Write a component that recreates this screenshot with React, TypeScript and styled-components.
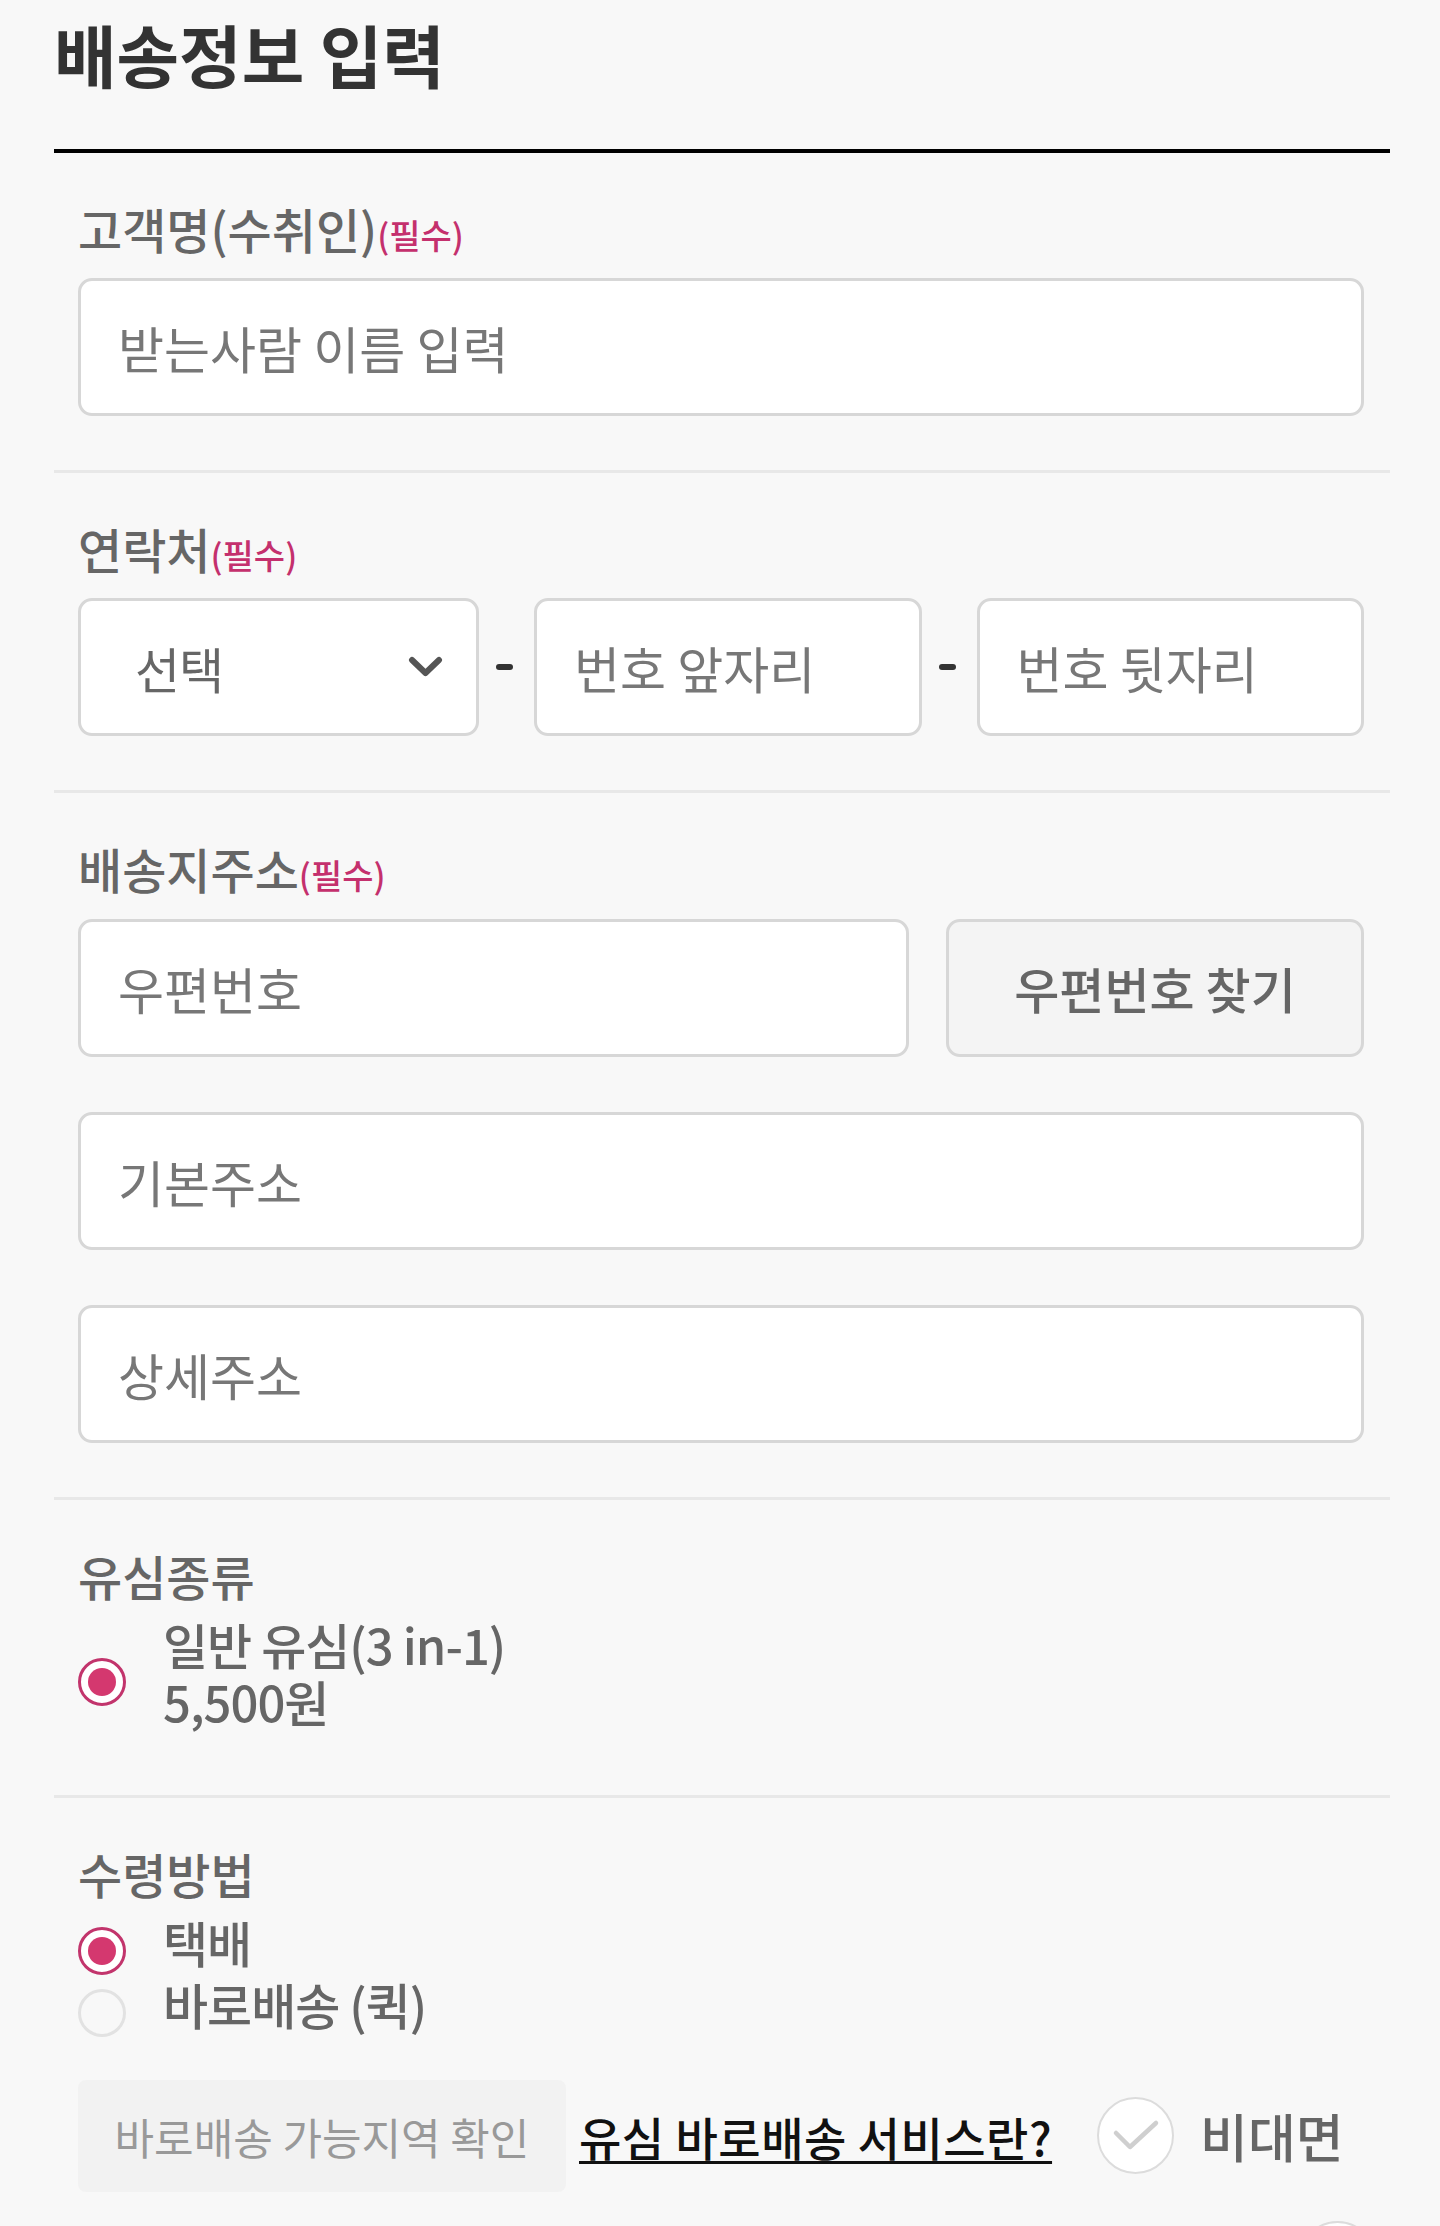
import React from 'react'
import styled, { createGlobalStyle } from 'styled-components'

const GlobalStyle = createGlobalStyle`
  html, body {
    margin: 0;
    padding: 0;
    background-color: #f8f8f8;
  }
  body {
    font-family: "Noto Sans CJK KR", "Noto Sans", sans-serif;
    -webkit-font-smoothing: antialiased;
  }
  * {
    box-sizing: border-box;
  }
`

const Page = styled.div`
  height: 2226px;
  overflow: hidden;
  padding: 20px 50px 0 54px;
`

const Header = styled.header`
  padding-bottom: 61px;
  border-bottom: 4px solid #000;
`

const Title = styled.h1`
  margin: 0;
  font-size: 68px;
  font-weight: 700;
  line-height: 1;
  color: #333;
`

const Section = styled.section<{ $bottom?: number; $last?: boolean }>`
  padding: 48px 26px ${({ $bottom = 54 }) => $bottom}px 24px;
  border-bottom: ${({ $last }) => ($last ? 'none' : '3px solid #e8e8e8')};
`

const Label = styled.div<{ $gap?: number }>`
  font-size: 48px;
  font-weight: 500;
  line-height: 1.15;
  color: #666;
  margin-bottom: ${({ $gap = 22 }) => $gap}px;
`

const Required = styled.span`
  font-size: 34px;
  color: #c4306d;
`

const TextInput = styled.input`
  display: block;
  width: 100%;
  height: 138px;
  padding: 0 37px;
  border: 3px solid #d7d7d7;
  border-radius: 14px;
  background-color: #fff;
  font-family: inherit;
  font-size: 50px;
  color: #333;
  outline: none;

  &::placeholder {
    color: #777;
  }
`

const PhoneRow = styled.div`
  display: flex;
  align-items: center;
`

const SelectBox = styled.div`
  flex: 0 0 401px;
  height: 138px;
  display: flex;
  align-items: center;
  justify-content: space-between;
  padding: 0 33px 0 54px;
  border: 3px solid #d7d7d7;
  border-radius: 14px;
  background-color: #fff;
  font-size: 49px;
  color: #666;
  letter-spacing: -1px;
`

const Separator = styled.div`
  flex: 0 0 55px;
  display: flex;
  justify-content: center;
  padding-right: 4px;
`

const Dash = styled.span`
  width: 17px;
  height: 6px;
  border-radius: 3px;
  background-color: #333;
`

const AddressStack = styled.div`
  display: flex;
  flex-direction: column;
  gap: 55px;
`

const AddressRow = styled.div`
  display: flex;
  gap: 37px;
`

const FindButton = styled.button`
  flex: 0 0 418px;
  height: 138px;
  border: 3px solid #d7d7d7;
  border-radius: 14px;
  background-color: #f4f4f4;
  font-family: inherit;
  font-size: 49px;
  font-weight: 500;
  color: #666;
  cursor: pointer;
`

const RadioGroup = styled.div<{ $pad?: number }>`
  display: flex;
  flex-direction: column;
  padding-bottom: ${({ $pad = 0 }) => $pad}px;
`

const RadioRow = styled.label`
  display: flex;
  align-items: flex-start;
  gap: 37px;
  cursor: pointer;
`

const RadioMark = styled.span<{ $checked?: boolean; $top: number }>`
  flex: 0 0 48px;
  height: 48px;
  margin-top: ${({ $top }) => $top}px;
  border-radius: 50%;
  border: 3px solid ${({ $checked }) => ($checked ? '#c2346c' : '#e2e2e2')};
  background-color: ${({ $checked }) => ($checked ? '#fff' : 'transparent')};
  display: flex;
  align-items: center;
  justify-content: center;

  &::after {
    content: '';
    width: 28px;
    height: 28px;
    border-radius: 50%;
    background-color: ${({ $checked }) => ($checked ? '#d4386f' : 'transparent')};
  }
`

const OptionText = styled.span<{ $lh: number }>`
  font-size: 49px;
  font-weight: 500;
  line-height: ${({ $lh }) => $lh}px;
  color: #666;
  letter-spacing: -1px;
`

const BottomRow = styled.div`
  display: flex;
  align-items: center;
  margin-top: 43px;
`

const AreaButton = styled.button`
  flex: 0 0 488px;
  height: 112px;
  border: none;
  border-radius: 8px;
  background-color: #f2f2f2;
  font-family: inherit;
  font-size: 43px;
  color: #999;
  margin-right: 13px;
`

const ServiceLink = styled.a`
  font-size: 46px;
  font-weight: 500;
  color: #111;
  letter-spacing: 0.5px;
  text-decoration: underline;
  text-decoration-thickness: 3px;
  text-underline-offset: 5px;
`

const CheckCircle = styled.span<{ $ml?: number }>`
  flex: 0 0 77px;
  width: 77px;
  height: 77px;
  margin-left: ${({ $ml = 0 }) => $ml}px;
  border-radius: 50%;
  border: 2px solid #dcdcdc;
  background-color: #fff;
  display: flex;
  align-items: center;
  justify-content: center;
`

const CheckLabel = styled.span`
  margin-left: 26px;
  font-size: 52px;
  font-weight: 500;
  color: #666;
`

const NextRow = styled.div`
  display: flex;
  justify-content: flex-end;
  margin-top: 29px;
  margin-right: -12px;
`

const Chevron = () => (
  <svg width="35" height="22" viewBox="0 0 35 22" fill="none">
    <path
      d="M4 4 L17.5 17 L31 4"
      stroke="#555"
      strokeWidth="6"
      strokeLinecap="round"
      strokeLinejoin="round"
    />
  </svg>
)

const CheckMark = () => (
  <svg width="50" height="34" viewBox="0 0 50 34" fill="none">
    <path
      d="M5 14 L19 28 L45 4"
      stroke="#cfcfcf"
      strokeWidth="4.5"
      strokeLinecap="round"
      strokeLinejoin="round"
    />
  </svg>
)

export default function App() {
  return (
    <>
      <GlobalStyle />
      <Page>
        <Header>
          <Title>배송정보 입력</Title>
        </Header>

        <Section>
          <Label>
            고객명(수취인)<Required>(필수)</Required>
          </Label>
          <TextInput placeholder="받는사람 이름 입력" />
        </Section>

        <Section>
          <Label>
            연락처<Required>(필수)</Required>
          </Label>
          <PhoneRow>
            <SelectBox>
              선택
              <Chevron />
            </SelectBox>
            <Separator>
              <Dash />
            </Separator>
            <TextInput placeholder="번호 앞자리" />
            <Separator>
              <Dash />
            </Separator>
            <TextInput placeholder="번호 뒷자리" />
          </PhoneRow>
        </Section>

        <Section>
          <Label>
            배송지주소<Required>(필수)</Required>
          </Label>
          <AddressStack>
            <AddressRow>
              <TextInput placeholder="우편번호" />
              <FindButton>우편번호 찾기</FindButton>
            </AddressRow>
            <TextInput placeholder="기본주소" />
            <TextInput placeholder="상세주소" />
          </AddressStack>
        </Section>

        <Section>
          <Label $gap={12}>유심종류</Label>
          <RadioGroup $pad={12}>
            <RadioRow>
              <RadioMark $checked $top={43} />
              <OptionText $lh={57}>
                일반 유심(3 in-1)
                <br />
                5,500원
              </OptionText>
            </RadioRow>
          </RadioGroup>
        </Section>

        <Section $last $bottom={0}>
          <Label $gap={12}>수령방법</Label>
          <RadioGroup>
            <RadioRow>
              <RadioMark $checked $top={14} />
              <OptionText $lh={58}>택배</OptionText>
            </RadioRow>
            <RadioRow>
              <RadioMark $top={14} />
              <OptionText $lh={58}>바로배송 (퀵)</OptionText>
            </RadioRow>
          </RadioGroup>

          <BottomRow>
            <AreaButton>바로배송 가능지역 확인</AreaButton>
            <ServiceLink href="#">유심 바로배송 서비스란?</ServiceLink>
            <CheckCircle $ml={45}>
              <CheckMark />
            </CheckCircle>
            <CheckLabel>비대면</CheckLabel>
          </BottomRow>

          <NextRow>
            <CheckCircle />
          </NextRow>
        </Section>
      </Page>
    </>
  )
}
